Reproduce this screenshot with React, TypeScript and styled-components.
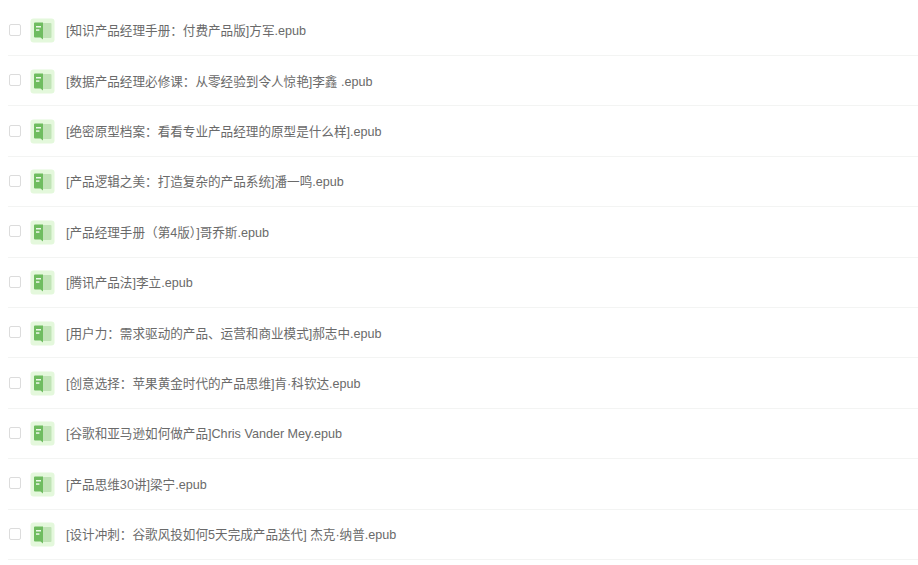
import React from "react";
import styled, { createGlobalStyle } from "styled-components";

const Global = createGlobalStyle`
  html, body { margin: 0; padding: 0; background: #fff; overflow: hidden; }
  body { font-family: "Liberation Sans", "Noto Sans CJK SC", sans-serif; }
`;

const List = styled.ul`
  list-style: none;
  margin: 0;
  padding: 5.6px 0 0 8px;
`;

const Row = styled.li`
  height: 50.4px;
  box-sizing: border-box;
  display: flex;
  align-items: center;
  padding-bottom: 1px;
  border-bottom: 1px solid #f3f4f3;
`;

const Check = styled.span`
  width: 10px;
  height: 10px;
  margin-left: 1px;
  border: 1px solid #dcdcdc;
  border-radius: 2px;
  background: #fff;
  flex: none;
`;

const IconBox = styled.svg`
  width: 25px;
  height: 25px;
  margin: 2px 0 0 9px;
  flex: none;
  filter: blur(0.5px);
`;

const Name = styled.span`
  margin-left: 11px;
  font-size: 12.6px;
  color: #6a6a6a;
  white-space: nowrap;
`;

const files = [
  "[知识产品经理手册：付费产品版]方军.epub",
  "[数据产品经理必修课：从零经验到令人惊艳]李鑫 .epub",
  "[绝密原型档案：看看专业产品经理的原型是什么样].epub",
  "[产品逻辑之美：打造复杂的产品系统]潘一鸣.epub",
  "[产品经理手册（第4版）]哥乔斯.epub",
  "[腾讯产品法]李立.epub",
  "[用户力：需求驱动的产品、运营和商业模式]郝志中.epub",
  "[创意选择：苹果黄金时代的产品思维]肯·科钦达.epub",
  "[谷歌和亚马逊如何做产品]Chris Vander Mey.epub",
  "[产品思维30讲]梁宁.epub",
  "[设计冲刺：谷歌风投如何5天完成产品迭代] 杰克·纳普.epub",
];

const BookIcon = () => (
  <IconBox viewBox="0 0 25 25" aria-hidden="true">
    <rect x="0.5" y="0.5" width="24" height="24" rx="3" fill="#e4f8dc" />
    <rect x="12" y="5" width="9.5" height="15" rx="1" fill="#c0e3b6" />
    <path d="M4 5.5a1 1 0 0 1 1-1H13v17l-2.5-2H5a1 1 0 0 1-1-1z" fill="#6fbc60" />
    <rect x="6" y="8" width="5" height="1.5" fill="#eef8ea" />
    <rect x="6" y="11.3" width="3.4" height="1.5" fill="#eef8ea" />
  </IconBox>
);

export default function App() {
  return (
    <>
      <Global />
      <List>
        {files.map((f) => (
          <Row key={f}>
            <Check />
            <BookIcon />
            <Name>{f}</Name>
          </Row>
        ))}
      </List>
    </>
  );
}
